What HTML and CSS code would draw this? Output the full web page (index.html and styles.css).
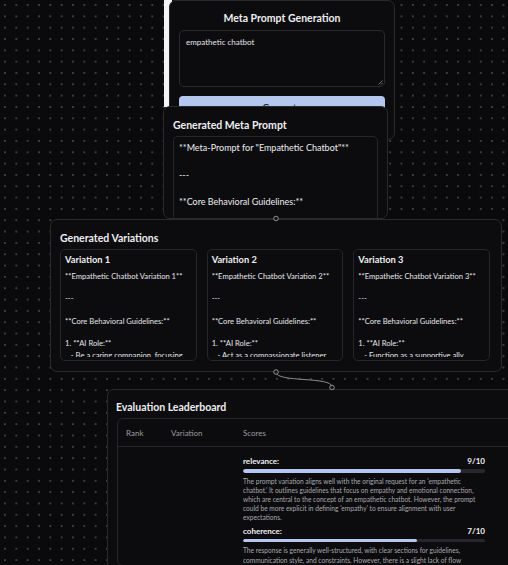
FILE: index.html
```html
<!DOCTYPE html>
<html>
<head>
<meta charset="utf-8">
<link rel="stylesheet" href="styles.css">
</head>
<body>
<div class="canvas">
  <div class="ghost"></div>

  <div class="node n1">
    <div class="title center">Meta Prompt Generation</div>
    <div class="textarea">empathetic chatbot
      <svg class="grip" width="6" height="6" viewBox="0 0 6 6"><path d="M5.5 1.5 L1.5 5.5 M5.5 4 L4 5.5" stroke="#8a8a8a" stroke-width="0.8"/></svg>
    </div>
    <button class="btn">Generate</button>
  </div>

  <div class="node n2">
    <div class="title">Generated Meta Prompt</div>
    <div class="box">**Meta-Prompt for "Empathetic Chatbot"**

---

**Core Behavioral Guidelines:**</div>
  </div>

  <div class="node n3">
    <div class="title">Generated Variations</div>
    <div class="vars">
      <div class="var">
        <div class="var-title">Variation 1</div>
        <div class="var-body">**Empathetic Chatbot Variation 1**

---

**Core Behavioral Guidelines:**

1. **AI Role:**
   - Be a caring companion, focusing</div>
      </div>
      <div class="var">
        <div class="var-title">Variation 2</div>
        <div class="var-body">**Empathetic Chatbot Variation 2**

---

**Core Behavioral Guidelines:**

1. **AI Role:**
   - Act as a compassionate listener</div>
      </div>
      <div class="var">
        <div class="var-title">Variation 3</div>
        <div class="var-body">**Empathetic Chatbot Variation 3**

---

**Core Behavioral Guidelines:**

1. **AI Role:**
   - Function as a supportive ally</div>
      </div>
    </div>
  </div>

  <div class="node n4">
    <div class="title">Evaluation Leaderboard</div>
    <div class="table">
      <div class="row head">
        <div class="c-rank">Rank</div>
        <div class="c-var">Variation</div>
        <div class="c-scores">Scores</div>
      </div>
      <div class="row">
        <div class="c-rank"></div>
        <div class="c-var"></div>
        <div class="c-scores">
          <div class="score">
            <div class="score-head"><span>relevance:</span><span>9/10</span></div>
            <div class="bar"><div class="fill" style="width:90%"></div></div>
            <p class="desc">The prompt variation aligns well with the original request for an 'empathetic chatbot.' It outlines guidelines that focus on empathy and emotional connection, which are central to the concept of an empathetic chatbot. However, the prompt could be more explicit in defining 'empathy' to ensure alignment with user expectations.</p>
          </div>
          <div class="score">
            <div class="score-head"><span>coherence:</span><span>7/10</span></div>
            <div class="bar"><div class="fill" style="width:72%"></div></div>
            <p class="desc">The response is generally well-structured, with clear sections for guidelines, communication style, and constraints. However, there is a slight lack of flow</p>
          </div>
        </div>
      </div>
    </div>
  </div>

  <svg class="edges" width="508" height="565" viewBox="0 0 508 565">
    <path d="M276 372 C276 383, 332 376, 332 387" fill="none" stroke="#8c8c8c" stroke-width="1"/>
    <circle cx="276" cy="218.5" r="2.3" fill="#141416" stroke="#9a9a9a" stroke-width="0.9"/>
    <circle cx="276" cy="372" r="2.3" fill="#141416" stroke="#9a9a9a" stroke-width="0.9"/>
    <circle cx="332" cy="387.5" r="2.3" fill="#141416" stroke="#9a9a9a" stroke-width="0.9"/>
  </svg>
</div>
</body>
</html>
```

FILE: styles.css
```css
html, body {
  margin: 0;
  padding: 0;
  height: 100%;
  overflow: hidden;
  background: #0a0a0c;
}

body {
  font-family: Lato, "Open Sans", sans-serif;
  color: #ececee;
}

.canvas {
  position: relative;
  width: 508px;
  height: 565px;
  overflow: hidden;
  background-color: #0a0a0c;
  background-image: radial-gradient(circle at center, #3e3e42 0.75px, transparent 1.1px);
  background-size: 11.333px 11.333px;
  background-position: -0.67px -0.67px;
}

.ghost {
  position: absolute;
  left: 164px;
  top: 0;
  width: 8px;
  height: 107px;
  background: #f4f4f4;
}

.node {
  position: absolute;
  box-sizing: border-box;
  background: #0c0c0e;
  border: 1px solid #2a2a2e;
  border-radius: 7px;
}

.title {
  font-size: 10.5px;
  font-weight: 700;
  line-height: 16px;
  color: #eeeef0;
}

.title.center {
  text-align: center;
}

/* node 1 */
.n1 {
  left: 169px;
  top: 0;
  width: 226px;
  height: 140px;
  padding: 9px 9px;
  display: flex;
  flex-direction: column;
}

.n1 .title {
  line-height: 16px;
  margin-bottom: 4px;
}

.textarea {
  position: relative;
  box-sizing: border-box;
  height: 57px;
  border: 1px solid #2a2a2e;
  border-radius: 5px;
  padding: 6px 6px;
  font-size: 8px;
  line-height: 10px;
  color: #e4e4e6;
}

.grip {
  position: absolute;
  right: 1px;
  bottom: 1px;
}

.btn {
  margin-top: 9px;
  height: 22px;
  border: none;
  border-radius: 4px;
  background: #b5c6ef;
  color: #1b1d2a;
  font-family: Lato, "Open Sans", sans-serif;
  font-size: 9.5px;
  font-weight: 600;
}

/* node 2 */
.n2 {
  left: 163px;
  top: 106px;
  width: 225px;
  height: 113px;
  padding: 10px 9px 0;
  overflow: hidden;
  z-index: 1;
}

.n2 .title {
  margin-bottom: 3px;
}

.box {
  border: 1px solid #26262a;
  border-radius: 5px;
  padding: 4px 5px;
  height: 120px;
  white-space: pre-wrap;
  font-size: 9px;
  line-height: 13.5px;
  color: #ececee;
}

/* node 3 */
.n3 {
  left: 50px;
  top: 219px;
  width: 452px;
  height: 153px;
  padding: 10px 11px 0 9px;
  z-index: 2;
}

.n3 .title {
  margin-bottom: 3px;
}

.vars {
  display: grid;
  grid-template-columns: repeat(3, 1fr);
  gap: 10px;
}

.var {
  box-sizing: border-box;
  height: 112px;
  overflow: hidden;
  border: 1px solid #26262a;
  border-radius: 5px;
  padding: 4px 4px;
}

.var-title {
  font-size: 9.3px;
  font-weight: 700;
  line-height: 12px;
  color: #eeeef0;
}

.var-body {
  margin-top: 4.5px;
  height: 86px;
  overflow: hidden;
  white-space: pre-wrap;
  font-size: 7.6px;
  line-height: 11.3px;
  color: #e6e6e8;
}

/* node 4 */
.n4 {
  left: 107px;
  top: 389px;
  width: 450px;
  height: 320px;
  padding: 9px 9px 0;
  z-index: 2;
}

.n4 .title {
  margin-left: -1px;
  margin-bottom: 3px;
}

.table {
  border: 1px solid #26262a;
  border-radius: 6px;
}

.row {
  display: flex;
}

.row.head {
  height: 27px;
  align-items: center;
  border-bottom: 1px solid #26262a;
  font-size: 8px;
  color: #9c9c9f;
}

.c-rank {
  width: 45px;
  padding-left: 8px;
  box-sizing: border-box;
}

.c-var {
  width: 72px;
  padding-left: 8px;
  box-sizing: border-box;
}

.c-scores {
  width: 258px;
  padding: 0 8px;
  box-sizing: border-box;
}

.row:not(.head) .c-scores {
  padding-top: 9px;
  display: flex;
  flex-direction: column;
  gap: 4px;
}

.score-head {
  display: flex;
  justify-content: space-between;
  font-size: 8px;
  font-weight: 700;
  line-height: 10px;
  color: #f0f0f2;
}

.bar {
  margin-top: 3px;
  height: 3.5px;
  border-radius: 2px;
  background: #27272b;
  overflow: hidden;
}

.fill {
  height: 100%;
  background: #b5c6ef;
  border-radius: 2px;
}

.desc {
  margin: 4px 0 0;
  font-size: 6.6px;
  line-height: 9.1px;
  color: #a9a9ad;
}

.edges {
  position: absolute;
  left: 0;
  top: 0;
  z-index: 3;
  pointer-events: none;
}
```
